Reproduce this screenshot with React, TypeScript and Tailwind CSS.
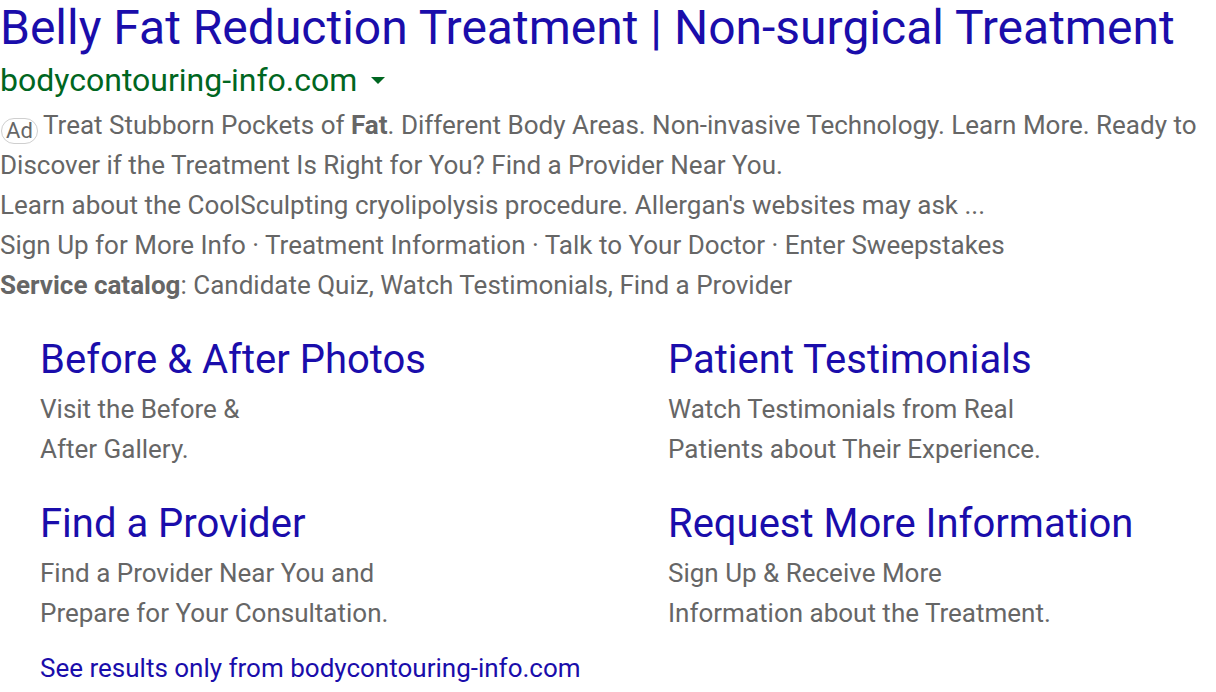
const sitelinks = [
  { title: "Before & After Photos", lines: ["Visit the Before &", "After Gallery."] },
  { title: "Patient Testimonials", lines: ["Watch Testimonials from Real", "Patients about Their Experience."] },
  { title: "Find a Provider", lines: ["Find a Provider Near You and", "Prepare for Your Consultation."] },
  { title: "Request More Information", lines: ["Sign Up & Receive More", "Information about the Treatment."] },
];

export default function App() {
  return (
    <div className="w-[1216px] h-[692px] bg-white overflow-hidden font-['Roboto',sans-serif]">
      <div className="h-[55px] text-[48px] leading-[55px] text-[#1a0dab] whitespace-nowrap">
        Belly Fat Reduction Treatment | Non-surgical Treatment
      </div>
      <div className="h-[50px] flex items-center gap-[14px] text-[32px] text-[#006621]">
        <span>bodycontouring-info.com</span>
        <svg width="14" height="8" viewBox="0 0 14 8" className="mt-[2px]">
          <path d="M0 0 L14 0 L7 7 Z" fill="#006621" />
        </svg>
      </div>
      <div className="text-[26px] leading-[40px] text-[#666666] whitespace-nowrap">
        <p>
          <span className="inline-flex items-center justify-center w-[37px] h-[26px] ml-[1px] mr-[5px] border border-[#cfcfcf] rounded-[13px] text-[22px] leading-none text-[#666666] align-[-4px]">
            Ad
          </span>
          Treat Stubborn Pockets of <b className="font-bold">Fat</b>. Different Body Areas. Non-invasive Technology. Learn More. Ready to
          <br />
          Discover if the Treatment Is Right for You? Find a Provider Near You.
        </p>
        <p>Learn about the CoolSculpting cryolipolysis procedure. Allergan's websites may ask ...</p>
        <p>Sign Up for More Info · Treatment Information · Talk to Your Doctor · Enter Sweepstakes</p>
        <p>
          <b className="font-bold">Service catalog</b>: Candidate Quiz, Watch Testimonials, Find a Provider
        </p>
      </div>
      <div className="grid grid-cols-[628px_1fr] pl-[40px] pt-[30px] gap-y-[30px]">
        {sitelinks.map((s) => (
          <div key={s.title}>
            <div className="text-[40px] leading-[50px] text-[#1a0dab] whitespace-nowrap">{s.title}</div>
            <div className="mt-[4px] text-[26px] leading-[40px] text-[#666666] whitespace-nowrap">
              {s.lines.map((l) => (
                <div key={l}>{l}</div>
              ))}
            </div>
          </div>
        ))}
      </div>
      <div className="pl-[40px] pt-[15px] text-[26px] leading-[40px] text-[#1a0dab]">
        See results only from bodycontouring-info.com
      </div>
    </div>
  );
}
